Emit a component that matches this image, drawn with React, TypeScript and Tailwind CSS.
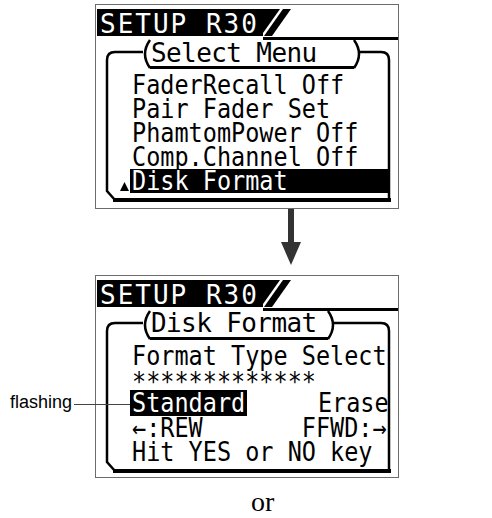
import React from 'react'

const mono = "font-['DejaVu_Sans_Mono',monospace] whitespace-pre"
// big font of the page tab and box titles
const big = `${mono} text-[26px] leading-[24px] tracking-[2px]`
const title = `${mono} text-[26px] leading-[24px] tracking-[-0.6px]`
// small dot-matrix font of the menu rows
const row = `${mono} text-[23.5px] leading-[24px] h-[24px]`

function Cells({ children }: { children: React.ReactNode }) {
  return <span className="inline-block scale-y-[1.15]">{children}</span>
}

// slanted end of the black title tab
function Slant() {
  return (
    <svg width="28" height="27" viewBox="0 0 28 27" className="block shrink-0">
      <polygon points="0,0 17,0 0,24" fill="#000" />
      <polygon points="20,0 28,0 9,27 1,27" fill="#000" />
    </svg>
  )
}

function Header() {
  return (
    <div className="flex ml-px mt-1 h-[27px]">
      <div className={`${big} w-[166px] bg-black text-white pl-[3px] pt-[3px]`}>SETUP R30</div>
      <Slant />
    </div>
  )
}

// rounded menu box, title brackets and rules drawn over the screen
function Outline({ close, bottom }: { close: number; bottom: number }) {
  return (
    <svg className="absolute inset-0 pointer-events-none" width="302" height="203" viewBox="0 0 302 203">
      <rect x="167" y="32" width="135" height="3" fill="#000" />
      <rect x="54" y="61" width={close - 54} height="3" fill="#000" />
      <path d="M54 35 Q44 49 54 63" stroke="#000" strokeWidth="2.5" fill="none" />
      <path d={`M${close} 35 Q${close + 10} 49 ${close} 63`} stroke="#000" strokeWidth="2.5" fill="none" />
      <path d={`M47 47 H19 Q11 47 11 55 V${bottom - 8} L19 ${bottom + 1}`} stroke="#000" strokeWidth="2.5" fill="none" />
      <path d={`M${close + 4} 47 H285 Q293 47 293 55 V${bottom}`} stroke="#000" strokeWidth="2.5" fill="none" />
      <rect x="17" y={bottom - 1} width="278" height="4" fill="#000" />
    </svg>
  )
}

function MenuScreen() {
  return (
    <div className="relative ml-[95px] w-[304px] h-[205px] border border-[#6b6b6b] bg-white text-black">
      <div className="flex flex-col">
        <Header />
        <div className={`${title} mt-[5px] pl-[55px]`}>Select Menu</div>
        <div className={`${row} mt-[8px] pl-[36px]`}><Cells>FaderRecall Off</Cells></div>
        <div className={`${row} pl-[36px]`}><Cells>Pair Fader Set</Cells></div>
        <div className={`${row} pl-[36px]`}><Cells>PhamtomPower Off</Cells></div>
        <div className={`${row} pl-[36px]`}><Cells>Comp.Channel Off</Cells></div>
        <div className="flex items-end ml-[24px]">
          <svg width="9" height="9" viewBox="0 0 9 9" className="block mb-[2px]">
            <polygon points="4.5,0 9,9 0,9" fill="#000" />
          </svg>
          <div className={`${row} ml-px w-[259px] bg-black text-white pl-[2px]`}><Cells>Disk Format</Cells></div>
        </div>
      </div>
      <Outline close={258} bottom={194} />
    </div>
  )
}

function FormatScreen() {
  return (
    <div className="relative ml-[95px] w-[304px] h-[203px] border border-[#6b6b6b] bg-white text-black">
      <div className="flex flex-col">
        <Header />
        <div className={`${title} mt-[4px] pl-[55px]`}>Disk Format</div>
        <div className={`${row} mt-[9px] pl-[36px]`}><Cells>Format Type Select</Cells></div>
        <div className={`${row} mt-[2px] !h-[20px] pl-[36px]`}><Cells>*************</Cells></div>
        <div className="flex items-start pl-[34px]">
          <div className={`${row} !h-[26px] bg-black text-white px-[2px] pt-px`}><Cells>Standard</Cells></div>
          <div className={`${row} pt-px`}><Cells>{'     Erase'}</Cells></div>
        </div>
        <div className={`${row} pl-[36px]`}><Cells>{'←:REW       FFWD:→'}</Cells></div>
        <div className={`${row} pl-[36px]`}><Cells>Hit YES or NO key</Cells></div>
      </div>
      <Outline close={232} bottom={194} />
    </div>
  )
}

export default function App() {
  return (
    <div className="relative w-[492px] h-[518px] overflow-hidden bg-white pt-[4px]">
      <MenuScreen />
      <svg className="block ml-[276px]" width="30" height="66" viewBox="0 0 30 66">
        <rect x="12" y="0" width="6" height="34" fill="#333" />
        <polygon points="5,33 25,33 15,56" fill="#333" />
      </svg>
      <FormatScreen />
      <div className="mt-[10px] ml-[251px] font-['Liberation_Serif',serif] text-[28px] leading-[28px] text-black">or</div>

      <div className="absolute left-[10px] top-[393px] font-['Liberation_Sans',Arial,sans-serif] text-[18px] leading-[18px] text-black">
        flashing
      </div>
      <div className="absolute left-[74px] top-[404px] w-[56px] h-px bg-[#444]" />
    </div>
  )
}
